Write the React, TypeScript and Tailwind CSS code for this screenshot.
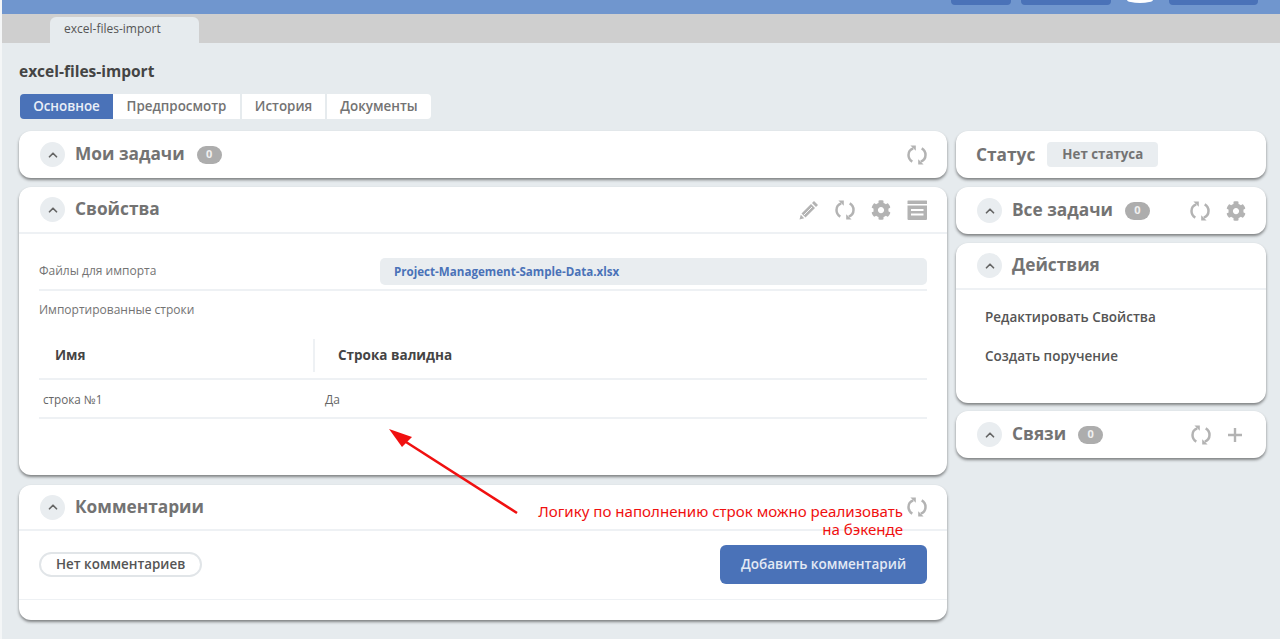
import React from 'react';
import { ChevronUp } from 'lucide-react';
import { FaCog } from 'react-icons/fa';

// Two open arcs with small arrow heads, as in the panel toolbars
const RefreshIcon = () => (
  <svg width="20" height="20" viewBox="0 0 20 20" fill="none" className="text-[#b3b3b3] shrink-0">
    <path d="M6.2 3.4C3 4.6 1.5 7 1.5 10c0 2.8 1.4 5.2 3.8 6.6" stroke="currentColor" strokeWidth="2.5" />
    <path d="M13.8 16.6c3.2-1.2 4.7-3.6 4.7-6.6 0-2.8-1.4-5.2-3.8-6.6" stroke="currentColor" strokeWidth="2.5" />
    <path d="M3.4 0.4h5.4v5.4z" fill="currentColor" />
    <path d="M16.6 19.6h-5.4v-5.4z" fill="currentColor" />
  </svg>
);

const PencilIcon = () => (
  <svg width="20" height="20" viewBox="0 0 20 20" className="text-[#b3b3b3] shrink-0">
    <path fill="currentColor" d="M15 1l4 4-2 2-4-4z" />
    <path fill="currentColor" d="M12 4l4 4-9.5 9.5-4-4z" />
    <path fill="currentColor" d="M1.8 14.8l3.4 3.4-4.7 1.3z" />
    <path d="M13 7L5 15" stroke="white" strokeWidth="0.9" />
  </svg>
);

const ArchiveIcon = () => (
  <svg width="20" height="20" viewBox="0 0 20 20" className="text-[#b3b3b3] shrink-0">
    <path fill="currentColor" fillRule="evenodd" d="M1 0.5h18.5a.5.5 0 0 1 .5.5v3H.5V1a.5.5 0 0 1 .5-.5zM.5 5.5h19.5V19a1 1 0 0 1-1 1H1.5a1 1 0 0 1-1-1zM4 9v2h12.5V9zM4 13.5v2h12.5v-2z" />
  </svg>
);

const PlusIcon = () => (
  <svg width="16" height="16" viewBox="0 0 16 16" className="text-[#b3b3b3] shrink-0">
    <path fill="currentColor" d="M6.8 1h2.4v5.8H15v2.4H9.2V15H6.8V9.2H1V6.8h5.8z" />
  </svg>
);

const Collapse = () => (
  <span className="w-[25px] h-[25px] rounded-full bg-[#e9edf0] flex items-center justify-center shrink-0">
    <ChevronUp size={14} strokeWidth={3} className="text-[#666666]" />
  </span>
);

const Count = () => (
  <span className="w-[25px] h-[18px] rounded-full bg-[#adadad] text-[#f0f0f0] text-[11px] font-bold flex items-center justify-center shrink-0">
    0
  </span>
);

const PanelHead = ({ title, border, tall = true, children }: { title: string; border?: boolean; tall?: boolean; children?: React.ReactNode }) => (
  <div className={`${tall ? 'h-[47px]' : 'h-[46px]'} flex items-center pl-[21px] pr-[20px] ${border ? 'border-b-2 border-[#eef1f4]' : ''}`}>
    <Collapse />
    <span className="ml-[10px] -mt-px text-[17.3px] font-bold text-[#737373]">{title}</span>
    {children}
  </div>
);

const Card = ({ className, children }: { className?: string; children: React.ReactNode }) => (
  <div className={`bg-white rounded-[12px] shadow-[0_2px_3px_rgba(0,0,0,0.45)] ${className ?? ''}`}>{children}</div>
);

export default function App() {
  return (
    <div className="relative h-[639px] overflow-hidden bg-[#e6ebee] border-l-2 border-[#f4f6f7] text-[#555555] font-['Open_Sans',sans-serif]">
      {/* top bar, cut off by the screenshot */}
      <div className="h-[14px] bg-[#7096ce] flex justify-end items-start pr-[22px]">
        <div className="w-[60px] h-[5px] rounded-b-[4px] bg-[#4a72b8]" />
        <div className="ml-[10px] w-[90px] h-[5px] rounded-b-[4px] bg-[#4a72b8]" />
        <div className="ml-[16px] w-[26px] h-[3px] rounded-b-[13px_3px] bg-white" />
        <div className="ml-[16px] w-[89px] h-[5px] rounded-b-[4px] bg-[#4a72b8]" />
      </div>

      <div className="h-[29px] bg-[#cfcfcf] pl-[48px] pt-[3px]">
        <div className="w-[149px] h-[26px] bg-[#e6ebee] rounded-t-[6px] text-[12px] text-[#555555] pl-[14px] leading-[23px]">
          excel-files-import
        </div>
      </div>

      <div className="pl-[17px] pr-[14px]">
        <h1 className="mt-[17px] h-[22px] text-[15.5px] leading-[22px] font-bold text-[#444444]">excel-files-import</h1>

        <div className="mt-[12px] ml-px flex h-[25px] text-[13.4px] font-semibold w-fit text-[#737373]">
          <div className="w-[93px] bg-[#4a72b8] text-[#e9eef7] rounded-l-[4px] flex items-center justify-center">Основное</div>
          <div className="w-[127px] bg-white flex items-center justify-center">Предпросмотр</div>
          <div className="ml-[2px] w-[83px] bg-white flex items-center justify-center">История</div>
          <div className="ml-[2px] w-[104px] bg-white rounded-r-[4px] flex items-center justify-center">Документы</div>
        </div>

        <div className="mt-[12px] flex gap-[9px] items-start">
          {/* main column */}
          <div className="w-[928px] flex flex-col">
            <Card>
              <PanelHead title="Мои задачи">
                <span className="ml-[12px]"><Count /></span>
                <span className="ml-auto"><RefreshIcon /></span>
              </PanelHead>
            </Card>

            <Card className="mt-[9px] h-[288px]">
              <PanelHead title="Свойства" border>
                <div className="ml-auto flex items-center gap-[16px]">
                  <PencilIcon />
                  <RefreshIcon />
                  <FaCog size={20} className="text-[#b3b3b3]" />
                  <ArchiveIcon />
                </div>
              </PanelHead>
              <div className="px-[20px] text-[12px] text-[#737373]">
                <div className="h-[57px] pt-[24px] flex items-start border-b-2 border-[#eef1f4]">
                  <span className="w-[341px] leading-[26px]">Файлы для импорта</span>
                  <span className="flex-1 h-[27px] rounded-[5px] bg-[#e9edf0] pl-[14px] text-[11.6px] font-bold text-[#4a72b8] leading-[27px]">
                    Project-Management-Sample-Data.xlsx
                  </span>
                </div>
                <div className="h-[36px] pt-[2px] flex items-center">Импортированные строки</div>
                <div className="h-[53px] pt-[5px] flex items-center border-b-2 border-[#eef1f4] text-[13.5px] font-bold text-[#444444]">
                  <span className="w-[274px] pl-[16px]">Имя</span>
                  <span className="h-[33px] border-l-2 border-[#eef1f4] pl-[23px] leading-[33px]">Строка валидна</span>
                </div>
                <div className="h-[39px] pt-[3px] flex items-center border-b-2 border-[#eef1f4] text-[#666666]">
                  <span className="w-[286px] pl-[4px] text-[11.7px]">строка №1</span>
                  <span>Да</span>
                </div>
              </div>
            </Card>

            <Card className="mt-[10px] h-[135px]">
              <PanelHead title="Комментарии" border tall={false}>
                <span className="ml-auto"><RefreshIcon /></span>
              </PanelHead>
              <div className="h-[69px] pb-px px-[20px] flex items-center justify-between border-b border-[#eef1f4]">
                <span className="h-[25px] px-[15px] rounded-full border-2 border-[#e1e5e8] text-[13.4px] font-semibold text-[#555555] leading-[21px]">
                  Нет комментариев
                </span>
                <span className="w-[207px] h-[39px] rounded-[6px] bg-[#4a72b8] text-[#e3e9f4] text-[13.5px] font-semibold flex items-center justify-center">
                  Добавить комментарий
                </span>
              </div>
            </Card>
          </div>

          {/* right column */}
          <div className="w-[310px] flex flex-col">
            <Card className="h-[47px] flex items-center pl-[20px]">
              <span className="text-[17.3px] font-bold text-[#737373]">Статус</span>
              <span className="ml-[12px] h-[25px] w-[111px] rounded-[4px] bg-[#e9edf0] text-[13.3px] font-bold text-[#737373] flex items-center justify-center">
                Нет статуса
              </span>
            </Card>

            <Card className="mt-[9px]">
              <PanelHead title="Все задачи">
                <span className="ml-[12px]"><Count /></span>
                <div className="ml-auto flex items-center gap-[16px]">
                  <RefreshIcon />
                  <FaCog size={20} className="text-[#b3b3b3]" />
                </div>
              </PanelHead>
            </Card>

            <Card className="mt-[9px] h-[160px]">
              <PanelHead title="Действия" border />
              <div className="pl-[29px] text-[13.5px] font-semibold text-[#555555]">
                <div className="mt-[17px] h-[20px] leading-[20px]">Редактировать Свойства</div>
                <div className="mt-[19px] h-[20px] leading-[20px]">Создать поручение</div>
              </div>
            </Card>

            <Card className="mt-[8px]">
              <PanelHead title="Связи">
                <span className="ml-[12px]"><Count /></span>
                <div className="ml-auto flex items-center gap-[16px] pr-[3px]">
                  <RefreshIcon />
                  <PlusIcon />
                </div>
              </PanelHead>
            </Card>
          </div>
        </div>
      </div>

      {/* red annotation drawn over the page */}
      <svg width="150" height="100" viewBox="0 0 150 100" className="absolute left-[374px] top-[425px]">
        <path d="M141 88L30 17" stroke="#f01010" strokeWidth="2.6" />
        <path d="M13 4L36 12L26 22z" fill="#f01010" />
      </svg>
      <div className="absolute left-[500px] top-[503px] w-[401px] text-right text-[15.1px] leading-[17.5px] text-[#f01010] font-['Noto_Sans',sans-serif]">
        Логику по наполнению строк можно реализовать
        <br />
        на бэкенде
      </div>
    </div>
  );
}
